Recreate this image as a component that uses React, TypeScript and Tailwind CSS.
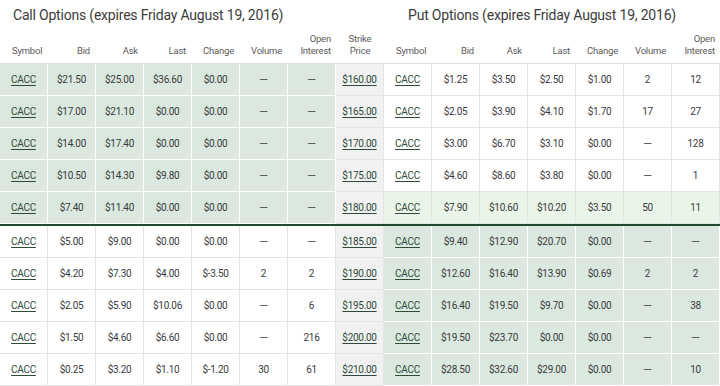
type Side = [string, string, string, string, string, string];

type Row = {
  call: Side;
  strike: string;
  put: Side;
};

const rows: Row[] = [
  { call: ["$21.50", "$25.00", "$36.60", "$0.00", "---", "---"], strike: "$160.00", put: ["$1.25", "$3.50", "$2.50", "$1.00", "2", "12"] },
  { call: ["$17.00", "$21.10", "$0.00", "$0.00", "---", "---"], strike: "$165.00", put: ["$2.05", "$3.90", "$4.10", "$1.70", "17", "27"] },
  { call: ["$14.00", "$17.40", "$0.00", "$0.00", "---", "---"], strike: "$170.00", put: ["$3.00", "$6.70", "$3.10", "$0.00", "---", "128"] },
  { call: ["$10.50", "$14.30", "$9.80", "$0.00", "---", "---"], strike: "$175.00", put: ["$4.60", "$8.60", "$3.80", "$0.00", "---", "1"] },
  { call: ["$7.40", "$11.40", "$0.00", "$0.00", "---", "---"], strike: "$180.00", put: ["$7.90", "$10.60", "$10.20", "$3.50", "50", "11"] },
  { call: ["$5.00", "$9.00", "$0.00", "$0.00", "---", "---"], strike: "$185.00", put: ["$9.40", "$12.90", "$20.70", "$0.00", "---", "---"] },
  { call: ["$4.20", "$7.30", "$4.00", "$-3.50", "2", "2"], strike: "$190.00", put: ["$12.60", "$16.40", "$13.90", "$0.69", "2", "2"] },
  { call: ["$2.05", "$5.90", "$10.06", "$0.00", "---", "6"], strike: "$195.00", put: ["$16.40", "$19.50", "$9.70", "$0.00", "---", "38"] },
  { call: ["$1.50", "$4.60", "$6.60", "$0.00", "---", "216"], strike: "$200.00", put: ["$19.50", "$23.70", "$0.00", "$0.00", "---", "---"] },
  { call: ["$0.25", "$3.20", "$1.10", "$-1.20", "30", "61"], strike: "$210.00", put: ["$28.50", "$32.60", "$29.00", "$0.00", "---", "10"] },
];

type Tone = "itm" | "otm" | "near";

const toneClass: Record<Tone, string> = {
  itm: "bg-[#dae8df] border-white",
  otm: "bg-white border-[#e4e4e4]",
  near: "bg-[#eaf5e9] border-[#e4e4e4]",
};

function Cell({ tone, children }: { tone: Tone; children: React.ReactNode }) {
  return (
    <div
      className={`flex h-[32px] items-center justify-center border-r border-b text-[10px] tracking-[-0.3px] text-[#3a3a3a] ${toneClass[tone]}`}
    >
      {children}
    </div>
  );
}

function Link({ children }: { children: React.ReactNode }) {
  return <span className="text-[#2f4a3a] underline underline-offset-2">{children}</span>;
}

function SideCells({ data, tone }: { data: Side; tone: Tone }) {
  return (
    <>
      <Cell tone={tone}>
        <Link>CACC</Link>
      </Cell>
      {data.map((v, i) => (
        <Cell tone={tone} key={i}>
          {v}
        </Cell>
      ))}
    </>
  );
}

const heads = ["Bid", "Ask", "Last", "Change", "Volume"];

function HeadSide() {
  return (
    <>
      <div className="pl-[12px] text-left">Symbol</div>
      {heads.map((h) => (
        <div key={h} className="pr-[6px] text-right">
          {h}
        </div>
      ))}
      <div className="pr-[5px] text-right leading-[12px]">
        Open
        <br />
        Interest
      </div>
    </>
  );
}

export default function App() {
  return (
    <div className="h-[386px] w-[720px] overflow-hidden bg-white font-['Roboto',sans-serif]">
      <div className="flex h-[30px] items-center text-[14px] text-[#3c3c3c]">
        <div className="w-[408px] pl-[13px] tracking-[-0.2px]">Call Options (expires Friday August 19, 2016)</div>
        <div className="tracking-[-0.2px]">Put Options (expires Friday August 19, 2016)</div>
      </div>
      <div className="grid h-[34px] grid-cols-[repeat(15,48px)] items-end border-b border-[#e0e0e0] pb-[6px] text-[9.5px] leading-[12px] tracking-[-0.2px] text-[#5a5a5a]">
        <HeadSide />
        <div className="text-center leading-[12px]">
          Strike
          <br />
          Price
        </div>
        <HeadSide />
      </div>
      {rows.map((r, i) => (
        <div key={r.strike}>
          {i === 5 && <div className="h-[2px] bg-[#1f4a2f]" />}
          <div className="grid grid-cols-[repeat(15,48px)]">
            <SideCells data={r.call} tone={i < 5 ? "itm" : "otm"} />
            <div className="flex h-[32px] items-center justify-center border-r border-b border-[#e4e4e4] bg-[#f1f1f1] text-[10px] tracking-[-0.3px]">
              <Link>{r.strike}</Link>
            </div>
            <SideCells data={r.put} tone={i < 4 ? "otm" : i === 4 ? "near" : "itm"} />
          </div>
        </div>
      ))}
    </div>
  );
}
